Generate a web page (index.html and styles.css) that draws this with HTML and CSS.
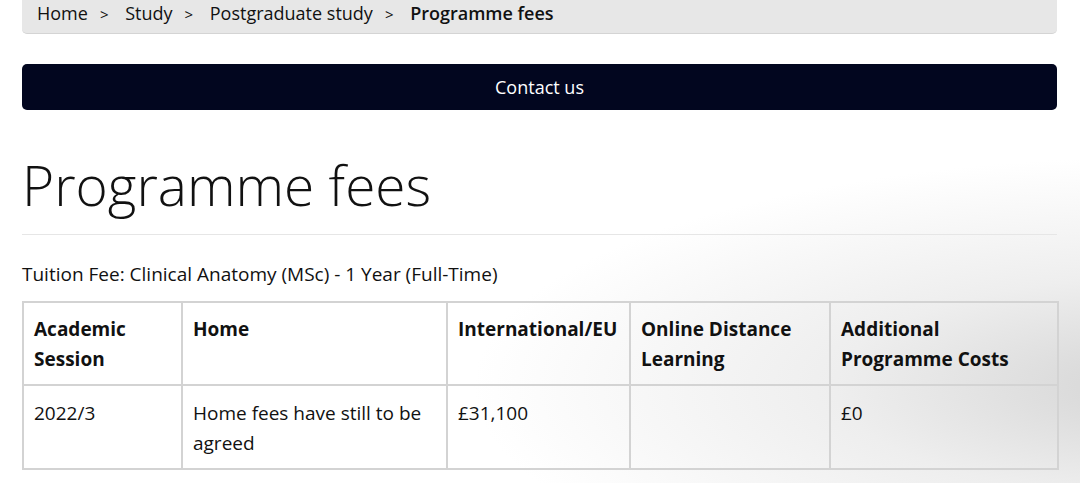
FILE: index.html
```html
<!DOCTYPE html>
<html lang="en">
<head>
  <meta charset="UTF-8" />
  <meta name="viewport" content="width=device-width, initial-scale=1.0"/>
  <title>Programme fees</title>
  <link rel="stylesheet" href="styles.css">
</head>
<body>

  <div class="page">
    <nav class="breadcrumb">
      <a href="#">Home</a><span class="sep">&gt;</span>
      <a href="#">Study</a><span class="sep">&gt;</span>
      <a href="#">Postgraduate study</a><span class="sep">&gt;</span>
      <span class="current">Programme fees</span>
    </nav>

    <a class="contact-btn" href="#">Contact us</a>

    <h1 class="page-title">Programme fees</h1>

    <table class="fees">
      <caption>Tuition Fee: Clinical Anatomy (MSc) - 1 Year (Full-Time)</caption>
      <colgroup>
        <col class="col-session">
        <col class="col-home">
        <col class="col-intl">
        <col class="col-online">
        <col class="col-extra">
      </colgroup>
      <thead>
        <tr>
          <th>Academic Session</th>
          <th>Home</th>
          <th>International/EU</th>
          <th>Online Distance Learning</th>
          <th>Additional Programme Costs</th>
        </tr>
      </thead>
      <tbody>
        <tr>
          <td>2022/3</td>
          <td>Home fees have still to be agreed</td>
          <td>£31,100</td>
          <td></td>
          <td>£0</td>
        </tr>
      </tbody>
    </table>
  </div>

</body>
</html>
```

FILE: styles.css
```css
body {
  margin: 0;
  font-family: 'Open Sans', sans-serif;
  color: #111;
  background: radial-gradient(
    ellipse at 108% 80%,
    rgba(212, 212, 212, 1) 0%,
    rgba(238, 238, 238, 1) 20%,
    rgba(255, 255, 255, 1) 42%
  );
  min-height: 483px;
  overflow: hidden;
}

.page {
  margin: 0 23px 0 22px;
}

.breadcrumb {
  background: #e7e7e7;
  border-bottom: 1px solid #d4d4d4;
  border-radius: 0 0 5px 5px;
  padding: 0 15px 7px;
  height: 26px;
  line-height: 26px;
  font-size: 18px;
}

.breadcrumb a,
.breadcrumb .current {
  color: #111;
  text-decoration: none;
}

.breadcrumb .current {
  font-weight: 600;
}

.breadcrumb .sep {
  margin: 0 12px;
  font-size: 15px;
}

.contact-btn {
  display: block;
  margin-top: 30px;
  height: 46px;
  line-height: 46px;
  border-radius: 5px;
  background: #02061f;
  color: #fff;
  text-align: center;
  font-size: 18px;
  font-weight: 500;
  text-decoration: none;
}

.page-title {
  margin: 39px 0 0;
  padding-bottom: 13px;
  border-bottom: 1px solid #e6e6e6;
  font-size: 55px;
  font-weight: 300;
  line-height: 72px;
  color: #111;
}

.fees {
  width: 100%;
  table-layout: fixed;
  border-collapse: collapse;
  font-size: 19px;
}

.fees caption {
  text-align: left;
  padding: 25px 0 13px;
  line-height: 28px;
}

.fees th,
.fees td {
  border: 2px solid #d3d3d3;
  padding: 11px 10px 10px;
  line-height: 30px;
  text-align: left;
  vertical-align: top;
}

.fees th {
  font-weight: 700;
}

.fees td {
  padding-top: 12px;
}

.col-session { width: 159px; }
.col-home { width: 265px; }
.col-intl { width: 183px; }
.col-online { width: 200px; }
.col-extra { width: 228px; }
```
